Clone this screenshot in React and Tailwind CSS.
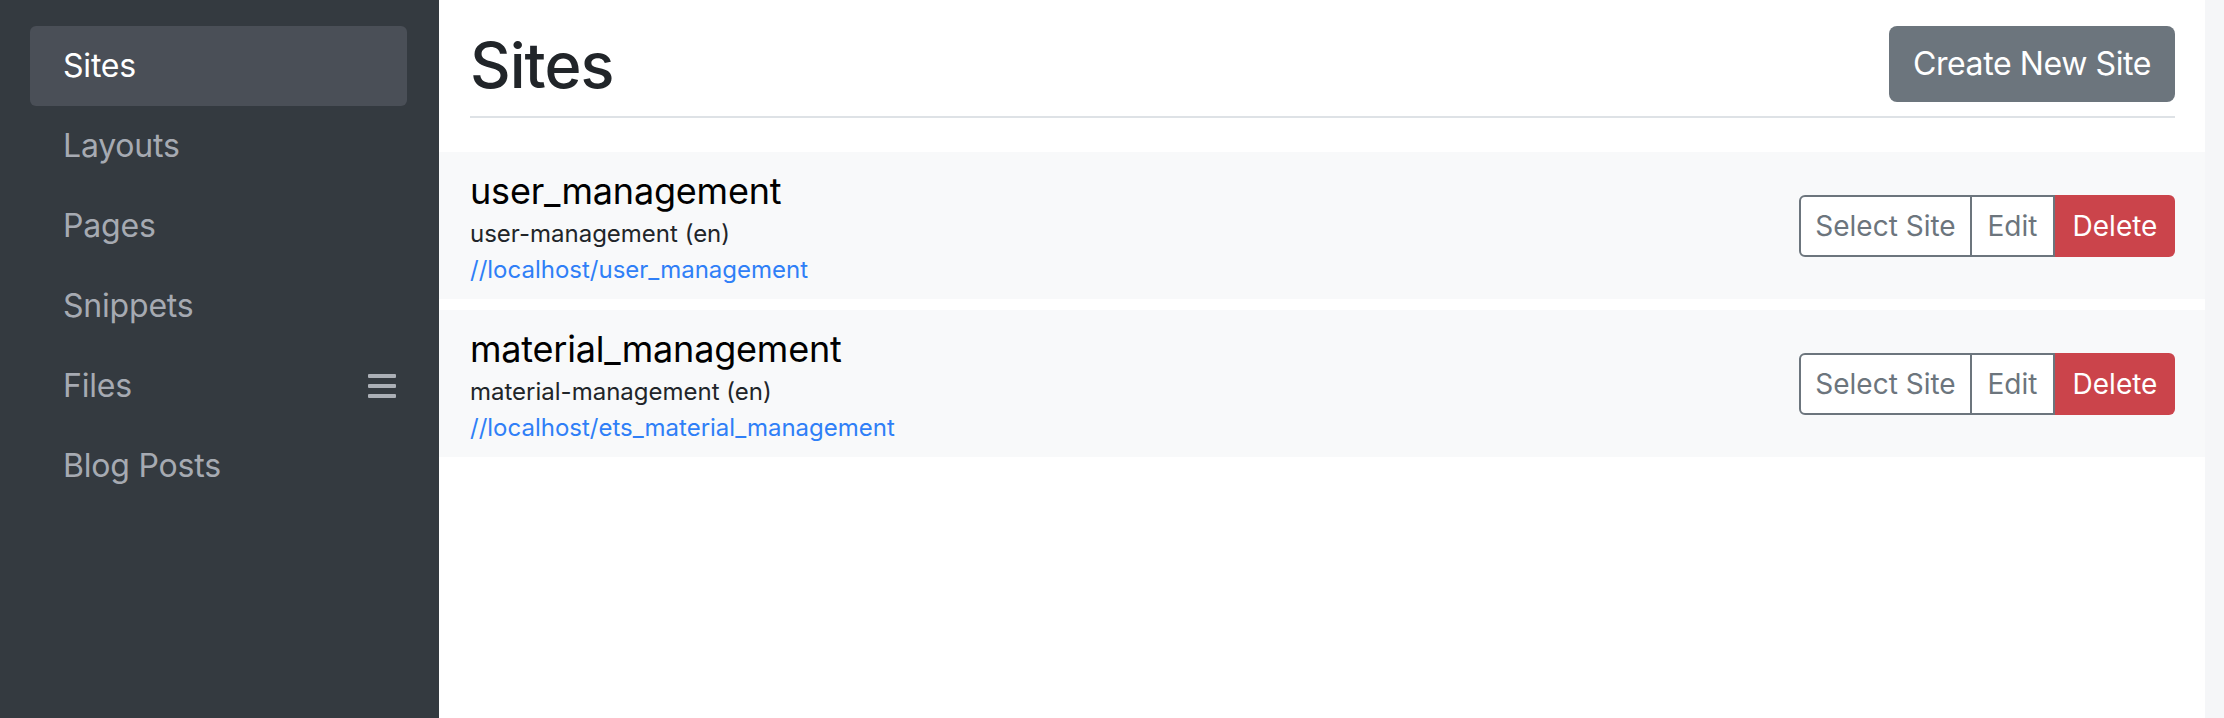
import React from "react";

const navItems = ["Sites", "Layouts", "Pages", "Snippets", "Files", "Blog Posts"];

const sites = [
  { name: "user_management", slug: "user-management (en)", url: "//localhost/user_management" },
  { name: "material_management", slug: "material-management (en)", url: "//localhost/ets_material_management" },
];

function Hamburger() {
  return (
    <span className="flex flex-col gap-[5.5px] w-[28px]">
      <span className="block h-[4.5px] rounded-[1px] bg-[#abafb6]" />
      <span className="block h-[4.5px] rounded-[1px] bg-[#abafb6]" />
      <span className="block h-[4.5px] rounded-[1px] bg-[#abafb6]" />
    </span>
  );
}

export default function App() {
  return (
    <div
      className="flex w-[2224px] h-[718px] overflow-hidden bg-white"
      style={{ fontFamily: "Inter, 'Liberation Sans', sans-serif" }}
    >
      <aside className="w-[439px] shrink-0 bg-[#343a40] pt-[26px] pl-[30px] pr-[32px]">
        <nav className="flex flex-col">
          {navItems.map((item, i) => (
            <div
              key={item}
              className={
                "flex items-center justify-between h-[80px] pl-[33px] pr-[11px] rounded-[6px] text-[32px] tracking-[-0.2px] " +
                (i === 0 ? "bg-[#4a4f57] text-white" : "text-[#a6aab2]")
              }
            >
              <span>{item}</span>
              {item === "Files" && <Hamburger />}
            </div>
          ))}
        </nav>
      </aside>

      <main className="flex-1 min-w-0 flex">
        <div className="flex-1 min-w-0 flex flex-col">
          <div className="pl-[31px] pr-[30px]">
            <div className="flex items-center justify-between pt-[26px] pb-[14px] border-b-2 border-[#dee2e6]">
              <h1 className="text-[63px] leading-none font-medium text-[#212529] tracking-[-1px] pt-[2px]">Sites</h1>
              <button className="h-[76px] w-[286px] rounded-[8px] bg-[#6c757d] text-white text-[32px] tracking-[-0.4px]">
                Create New Site
              </button>
            </div>
          </div>

          <div className="mt-[34px] flex flex-col gap-[11px]">
            {sites.map((s) => (
              <div key={s.name} className="h-[147px] bg-[#f8f9fa] flex items-start justify-between pl-[31px] pr-[30px]">
                <div className="flex flex-col pt-[16px]">
                  <div className="text-[36px] leading-[46px] text-black tracking-[-0.2px]">{s.name}</div>
                  <div className="text-[24px] leading-[40px] text-[#212529]">{s.slug}</div>
                  <a className="text-[24px] leading-[32px] text-[#2f7ff7]" href="#">{s.url}</a>
                </div>
                <div className="flex h-[62px] mt-[43px] text-[28px]">
                  <button className="w-[173px] border-2 border-[#6c757d] rounded-l-[6px] bg-white text-[#6c757d]">
                    Select Site
                  </button>
                  <button className="w-[83px] border-2 border-l-0 border-[#6c757d] bg-white text-[#6c757d]">
                    Edit
                  </button>
                  <button className="w-[120px] rounded-r-[6px] bg-[#cb444b] text-white">Delete</button>
                </div>
              </div>
            ))}
          </div>
        </div>
        <div className="w-[19px] shrink-0 bg-[#f5f6f8]" />
      </main>
    </div>
  );
}
